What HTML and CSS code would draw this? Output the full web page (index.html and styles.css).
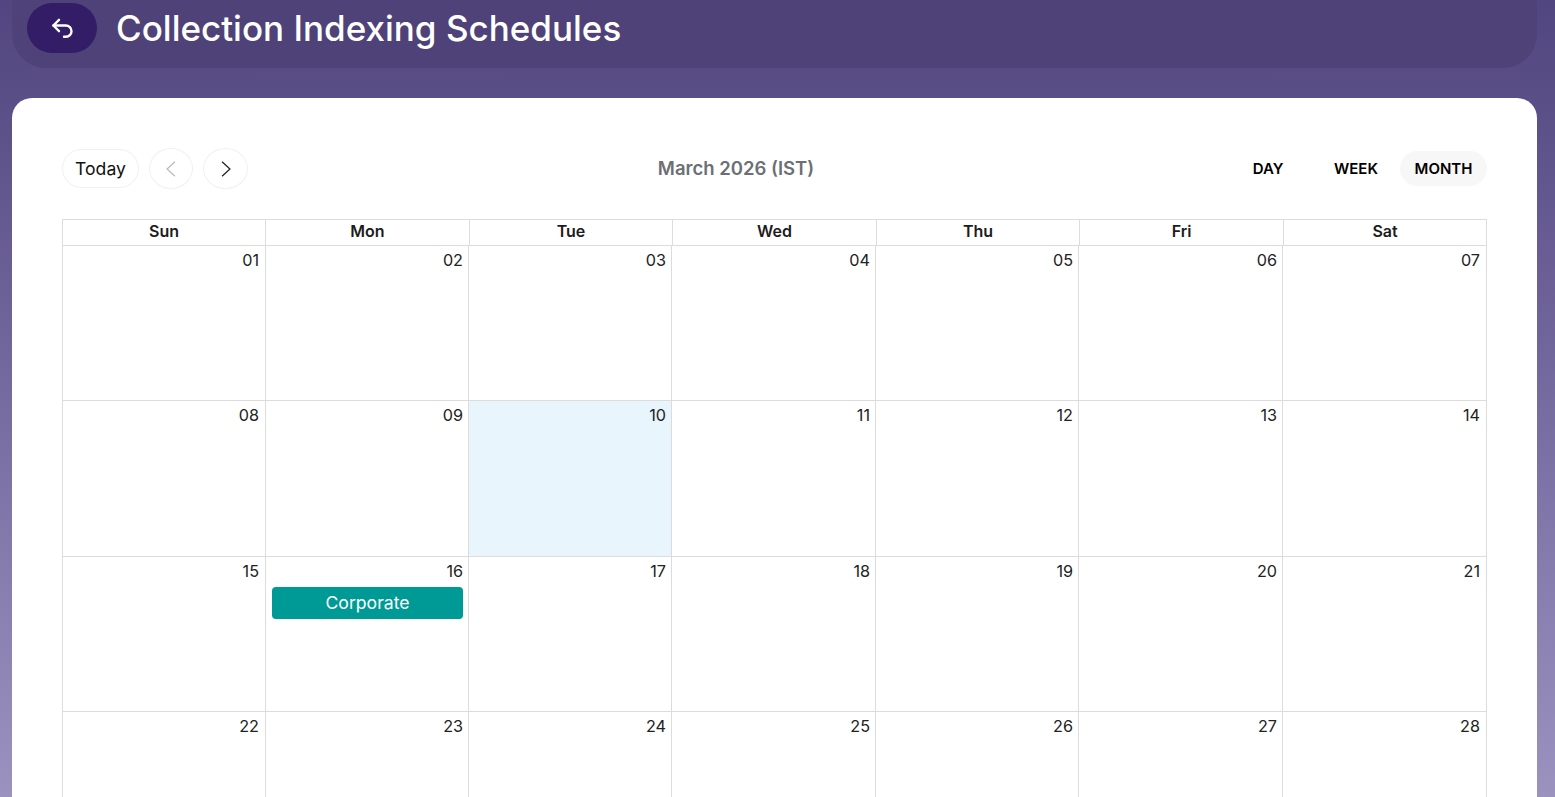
FILE: index.html
```html
<!DOCTYPE html>
<html lang="en">
<head>
  <meta charset="UTF-8">
  <meta name="viewport" content="width=device-width, initial-scale=1.0">
  <title>Collection Indexing Schedules</title>
  <link rel="stylesheet" href="styles.css">
</head>
<body>
  <header class="page-header">
    <button class="back-btn" type="button" aria-label="Back">
      <svg width="30" height="30" viewBox="-0.6 0 24 24" fill="none" stroke="currentColor" stroke-width="1.9" stroke-linecap="round" stroke-linejoin="round"><path d="M9 5.5 4.5 10 9 14.5"/><path d="M4.5 10h10a4.5 4.5 0 0 1 0 9H13"/></svg>
    </button>
    <h1>Collection Indexing Schedules</h1>
  </header>

  <main class="card">
    <div class="toolbar">
      <div class="nav-group">
        <button class="pill" type="button">Today</button>
        <button class="round disabled" type="button" aria-label="Previous">
          <svg width="18" height="18" viewBox="0 0 16 16" fill="none" stroke="currentColor" stroke-width="1.1"><path d="M11.5 1.5 4.5 8l7 6.5"/></svg>
        </button>
        <button class="round" type="button" aria-label="Next">
          <svg width="18" height="18" viewBox="0 0 16 16" fill="none" stroke="currentColor" stroke-width="1.1"><path d="M4.5 1.5 11.5 8l-7 6.5"/></svg>
        </button>
      </div>
      <div class="month-title">March 2026 (IST)</div>
      <div class="view-group">
        <button class="view" type="button">DAY</button>
        <button class="view" type="button">WEEK</button>
        <button class="view active" type="button">MONTH</button>
      </div>
    </div>

    <div class="cal-head">
      <div>Sun</div><div>Mon</div><div>Tue</div><div>Wed</div><div>Thu</div><div>Fri</div><div>Sat</div>
    </div>
    <div class="cal-body">
      <div class="day">01</div><div class="day">02</div><div class="day">03</div><div class="day">04</div><div class="day">05</div><div class="day">06</div><div class="day">07</div>
      <div class="day">08</div><div class="day">09</div><div class="day today-cell">10</div><div class="day">11</div><div class="day">12</div><div class="day">13</div><div class="day">14</div>
      <div class="day">15</div><div class="day">16<div class="event">Corporate</div></div><div class="day">17</div><div class="day">18</div><div class="day">19</div><div class="day">20</div><div class="day">21</div>
      <div class="day">22</div><div class="day">23</div><div class="day">24</div><div class="day">25</div><div class="day">26</div><div class="day">27</div><div class="day">28</div>
    </div>
  </main>
</body>
</html>
```

FILE: styles.css
```css
* {
  box-sizing: border-box;
}

html, body {
  height: 100%;
  overflow: hidden;
}

body {
  margin: 0;
  padding: 0 18px 0 12px;
  font-family: Inter, "Liberation Sans", sans-serif;
  background: linear-gradient(180deg, #524680 0%, #5c5089 15%, #9b92c0 100%);
}

button {
  font-family: inherit;
  background: none;
  cursor: pointer;
}

.page-header {
  display: flex;
  align-items: flex-start;
  gap: 19px;
  height: 68px;
  padding: 3px 15px 0;
  background: #4f4279;
  border-radius: 0 0 34px 34px;
}

.back-btn {
  display: flex;
  align-items: center;
  justify-content: center;
  width: 70px;
  height: 50px;
  padding: 0;
  color: #fff;
  background: #321d66;
  border: none;
  border-radius: 25px;
}

.page-header h1 {
  margin: 0;
  font-size: 35px;
  font-weight: 500;
  line-height: 50px;
  color: #fff;
}

.card {
  height: calc(100vh - 98px);
  margin-top: 30px;
  padding: 50px 50px 0;
  overflow: hidden;
  background: #fff;
  border-radius: 20px 20px 0 0;
}

.toolbar {
  display: flex;
  align-items: center;
  justify-content: space-between;
  height: 41px;
  margin-bottom: 30px;
}

.nav-group {
  display: flex;
  align-items: center;
  gap: 10px;
}

.pill {
  width: 77px;
  height: 39px;
  padding: 0;
  font-size: 17.6px;
  color: #111;
  border: 1px solid #f0f0f0;
  border-radius: 20px;
}

.round {
  display: flex;
  align-items: center;
  justify-content: center;
  width: 45px;
  height: 41px;
  padding: 0;
  color: #222;
  border: 1px solid #f0f0f0;
  border-radius: 50%;
}

.round.disabled {
  width: 44px;
  color: #bbb;
}

.month-title {
  padding-bottom: 2px;
  font-size: 18.5px;
  font-weight: 600;
  color: #6c7075;
}

.view-group {
  display: grid;
  grid-template-columns: 88px 88px 87px;
}

.view {
  height: 35px;
  padding: 0;
  font-size: 15px;
  font-weight: 600;
  color: #000;
  border: none;
  border-radius: 18px;
}

.view.active {
  background: #f7f7f7;
}

.cal-head {
  display: grid;
  grid-template-columns: 203px 204px 203px 204px 203px 204px 204px;
  height: 27px;
  border-top: 1px solid #dcdcdc;
  border-bottom: 1px solid #dcdcdc;
}

.cal-head div {
  font-size: 16px;
  font-weight: 600;
  line-height: 23px;
  text-align: center;
  color: #1c1c1c;
  border-left: 1px solid #dcdcdc;
}

.cal-head div:last-child {
  border-right: 1px solid #dcdcdc;
}

.cal-body {
  display: grid;
  grid-template-columns: 203px 203px 203px 204px 203px 204px 205px;
  grid-template-rows: 155px 156px 155px 155px;
}

.day {
  padding: 4px 5px 0 6px;
  font-size: 16.2px;
  line-height: 20px;
  text-align: right;
  color: #222;
  border-left: 1px solid #dcdcdc;
  border-bottom: 1px solid #dcdcdc;
}

.day:nth-child(7n+1) {
  padding-right: 6px;
}

.day:nth-child(7n) {
  padding-right: 6px;
  border-right: 1px solid #dcdcdc;
}

.today-cell {
  background: #e8f5fd;
}

.event {
  height: 32px;
  margin-top: 6px;
  font-size: 17.6px;
  line-height: 32px;
  text-align: center;
  color: #fff;
  background: #009a96;
  border-radius: 4px;
}
```
